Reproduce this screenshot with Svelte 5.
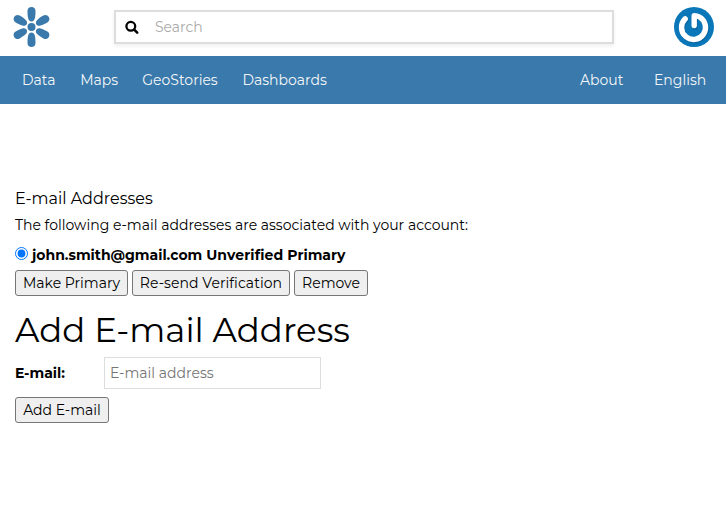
<script>
  const primaryLinks = [
    { label: 'Data', width: 34 },
    { label: 'Maps', width: 38 },
    { label: 'GeoStories', width: 76 },
    { label: 'Dashboards', width: 86 }
  ];
  let selected = $state('john.smith@gmail.com');
  const petals = [0, 60, 120, 180, 240, 300];
</script>

<div class="page">
  <header>
    <svg class="logo" width="40" height="42" viewBox="-19.5 -21 40 42" fill="#3a79ab">
      <circle r="4" />
      {#each petals as angle}
        <path transform={`rotate(${angle})`} d="M-3.3-8.5C-3.9-11-4-13-4-16C-4-18.5-2.3-20 0-20S4-18.5 4-16C4-13 3.9-11 3.3-8.5C2.5-4.6-2.5-4.6-3.3-8.5Z" />
      {/each}
    </svg>
    <div class="search">
      <svg width="15" height="15" viewBox="0 0 15 15" fill="none" stroke="#000">
        <circle cx="5.8" cy="6.3" r="4.4" stroke-width="2.3" />
        <path d="M9.2 9.7L12.2 12.7" stroke-width="2.6" stroke-linecap="round" />
      </svg>
      <input placeholder="Search" aria-label="Search" />
    </div>
    <svg class="avatar" width="40" height="40" viewBox="0 0 40 40">
      <circle cx="20" cy="20" r="20" fill="#0a77b9" />
      <g fill="none" stroke-linecap="round" stroke-linejoin="round" stroke-width="5.4">
        <path d="M11.2 12A12 12 0 1 0 25.5 10.2Q23 8.8 20.2 8.8V19" stroke="#07588d" opacity=".6" transform="translate(.8 1)" />
        <path d="M11.2 11.8A12 12 0 1 0 25.5 10Q23 8.6 20.2 8.6V18.6" stroke="#fff" />
      </g>
    </svg>
  </header>

  <nav>
    <div class="links">
      {#each primaryLinks as link}
        <span style:width={`${link.width}px`}>{link.label}</span>
      {/each}
    </div>
    <div class="links right"><span>About</span><span>English</span></div>
  </nav>

  <main>
    <h2>E-mail Addresses</h2>
    <p>The following e-mail addresses are associated with your account:</p>
    <label class="address">
      <input type="radio" name="email" value="john.smith@gmail.com" bind:group={selected} />
      <strong>john.smith@gmail.com <span>Unverified</span> Primary</strong>
    </label>
    <div class="actions">
      <button class="make">Make Primary</button>
      <button class="resend">Re-send Verification</button>
      <button class="remove">Remove</button>
    </div>
    <h1>Add E-mail Address</h1>
    <div class="field">
      <label for="email">E-mail:</label>
      <input id="email" type="email" placeholder="E-mail address" />
    </div>
    <button class="add">Add E-mail</button>
  </main>
</div>

<style>
  :global(body) { margin: 0; background: #fff; }
  .page, button, input { font-family: Montserrat, Inter, "Open Sans", sans-serif; font-size: 14px; }
  .page { width: 726px; height: 526px; overflow: hidden; color: #000; }
  * { box-sizing: border-box; }
  header { height: 56px; display: flex; align-items: flex-start; padding: 6px 12px 0; }
  .logo { flex: none; }
  .search { width: 500px; height: 34px; margin: 4px 0 0 62px; border: 2px solid #ddd; box-shadow: 0 2px 4px #0001; display: flex; align-items: center; padding-left: 9px; }
  .search input { border: 0; outline: 0; padding: 0; margin-left: 15px; width: 300px; background: none; }
  .search input::placeholder { color: #aaa; }
  .avatar { margin: 1px 0 0 auto; }
  nav { height: 48px; background: #3a79ab; color: #f3f7fa; display: flex; justify-content: space-between; align-items: center; padding: 0 20px 0 22px; }
  .links { display: flex; gap: 24.15px; white-space: nowrap; }
  .right { gap: 31px; }
  .right span:first-child { width: 43px; }
  .right span:last-child { width: 52px; }
  main { padding: 84px 15px 0; }
  h1, h2, p { margin: 0; white-space: nowrap; }
  h2 { font-size: 16px; font-weight: 400; line-height: 22px; }
  p { margin-top: 5px; line-height: 20px; }
  .address { display: flex; height: 20px; margin-top: 10px; align-items: center; white-space: nowrap; }
  .address input { width: 13px; height: 13px; margin: -3px 4px 0 0; accent-color: #0075ff; }
  strong { font-weight: 700; line-height: 20px; }
  strong span { letter-spacing: .12px; }
  .actions { display: flex; gap: 4px; margin-top: 5px; }
  button { display: block; height: 26px; padding: 0; border: 1px solid #767676; border-radius: 3px; background: #efefef; color: #000; white-space: nowrap; text-align: center; }
  .make { width: 113px; }
  .resend { width: 158px; letter-spacing: .06px; }
  .remove { width: 74px; }
  h1 { font-size: 34px; font-weight: 400; line-height: 44px; margin-top: 12px; }
  .field { display: flex; align-items: center; height: 32px; margin-top: 5px; }
  .field label { width: 89px; font-weight: 700; }
  .field input { width: 217px; height: 32px; border: 1px solid #ddd; padding: 0 5px; border-radius: 0; }
  .field input::placeholder { color: #757575; }
  .add { width: 94px; margin-top: 8px; }
</style>
